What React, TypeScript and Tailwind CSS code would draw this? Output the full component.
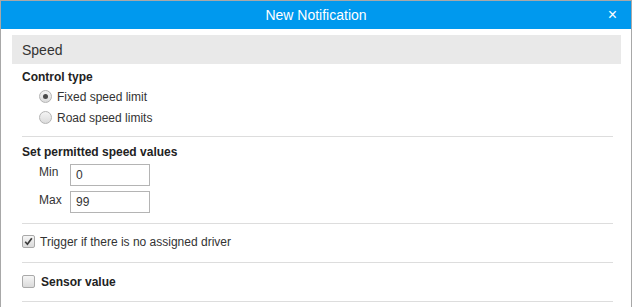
import React from "react";

function Radio({ checked }: { checked?: boolean }) {
  return (
    <span className="flex h-[13px] w-[13px] items-center justify-center rounded-full border border-[#b4b4b4] bg-gradient-to-b from-[#f4f4f4] to-[#dcdcdc]">
      {checked && <span className="h-[5px] w-[5px] rounded-full bg-[#4a4a4a]" />}
    </span>
  );
}

function Checkbox({ checked }: { checked?: boolean }) {
  return (
    <span className="flex h-[13px] w-[13px] items-center justify-center rounded-[2px] border border-[#a9a9a9] bg-gradient-to-b from-[#f6f6f6] to-[#dadada]">
      {checked && (
        <svg width="9" height="9" viewBox="0 0 9 9">
          <path d="M1.2 4.8 L3.4 7.2 L7.8 1.2" fill="none" stroke="#3a3a3a" strokeWidth="1.7" />
        </svg>
      )}
    </span>
  );
}

function Divider() {
  return <div className="h-px bg-[#dddddd]" />;
}

export default function App() {
  return (
    <div
      className="h-[307px] w-[632px] overflow-hidden border border-b-0 border-[#a8a8a8] bg-white text-[12px] leading-[14px] text-[#333]"
      style={{ fontFamily: '"Liberation Sans", Arial, sans-serif' }}
    >
      {/* header */}
      <div className="relative flex h-[28px] items-center justify-center bg-[#0099ee] text-[14px] text-white">
        <span>New Notification</span>
        <span className="absolute right-[14px] top-[6px] text-[16px] leading-[15px]">×</span>
      </div>

      <div className="ml-[11px] mr-[10px] pt-[6px]">
        <div className="flex h-[29px] items-center bg-[#e9e9e9] pl-[10px] text-[14px] text-[#333]">
          Speed
        </div>

        <div className="ml-[10px] mr-[8px]">
          {/* control type */}
          <div className="mt-[6px] font-bold text-[#222]">Control type</div>
          <div className="mt-[2px] pl-[17px]">
            <div className="flex h-[21px] items-center gap-[5px]">
              <Radio checked />
              <span>Fixed speed limit</span>
            </div>
            <div className="flex h-[21px] items-center gap-[5px]">
              <Radio />
              <span>Road speed limits</span>
            </div>
          </div>
          <div className="mt-[8px]">
            <Divider />
          </div>

          {/* speed values */}
          <div className="mt-[8px] font-bold text-[#222]">Set permitted speed values</div>
          <div className="mt-[5px] flex flex-col gap-[5px] pl-[17px]">
            <div className="flex h-[22px] items-center">
              <span className="w-[31px] -translate-y-[3px]">Min</span>
              <div className="flex h-[22px] w-[80px] items-center border border-[#b4b4b4] pl-[5px]">0</div>
            </div>
            <div className="flex h-[22px] items-center">
              <span className="w-[31px] -translate-y-[2px]">Max</span>
              <div className="flex h-[22px] w-[80px] items-center border border-[#b4b4b4] pl-[5px]">99</div>
            </div>
          </div>
          <div className="mt-[10px]">
            <Divider />
          </div>

          {/* driver */}
          <div className="mt-[7px] flex h-[21px] items-center gap-[5px]">
            <Checkbox checked />
            <span>Trigger if there is no assigned driver</span>
          </div>
          <div className="mt-[10px]">
            <Divider />
          </div>

          {/* sensor */}
          <div className="mt-[8px] flex h-[21px] items-center gap-[6px]">
            <Checkbox />
            <span className="font-bold text-[#222]">Sensor value</span>
          </div>
          <div className="mt-[9px]">
            <Divider />
          </div>
        </div>
      </div>
    </div>
  );
}
